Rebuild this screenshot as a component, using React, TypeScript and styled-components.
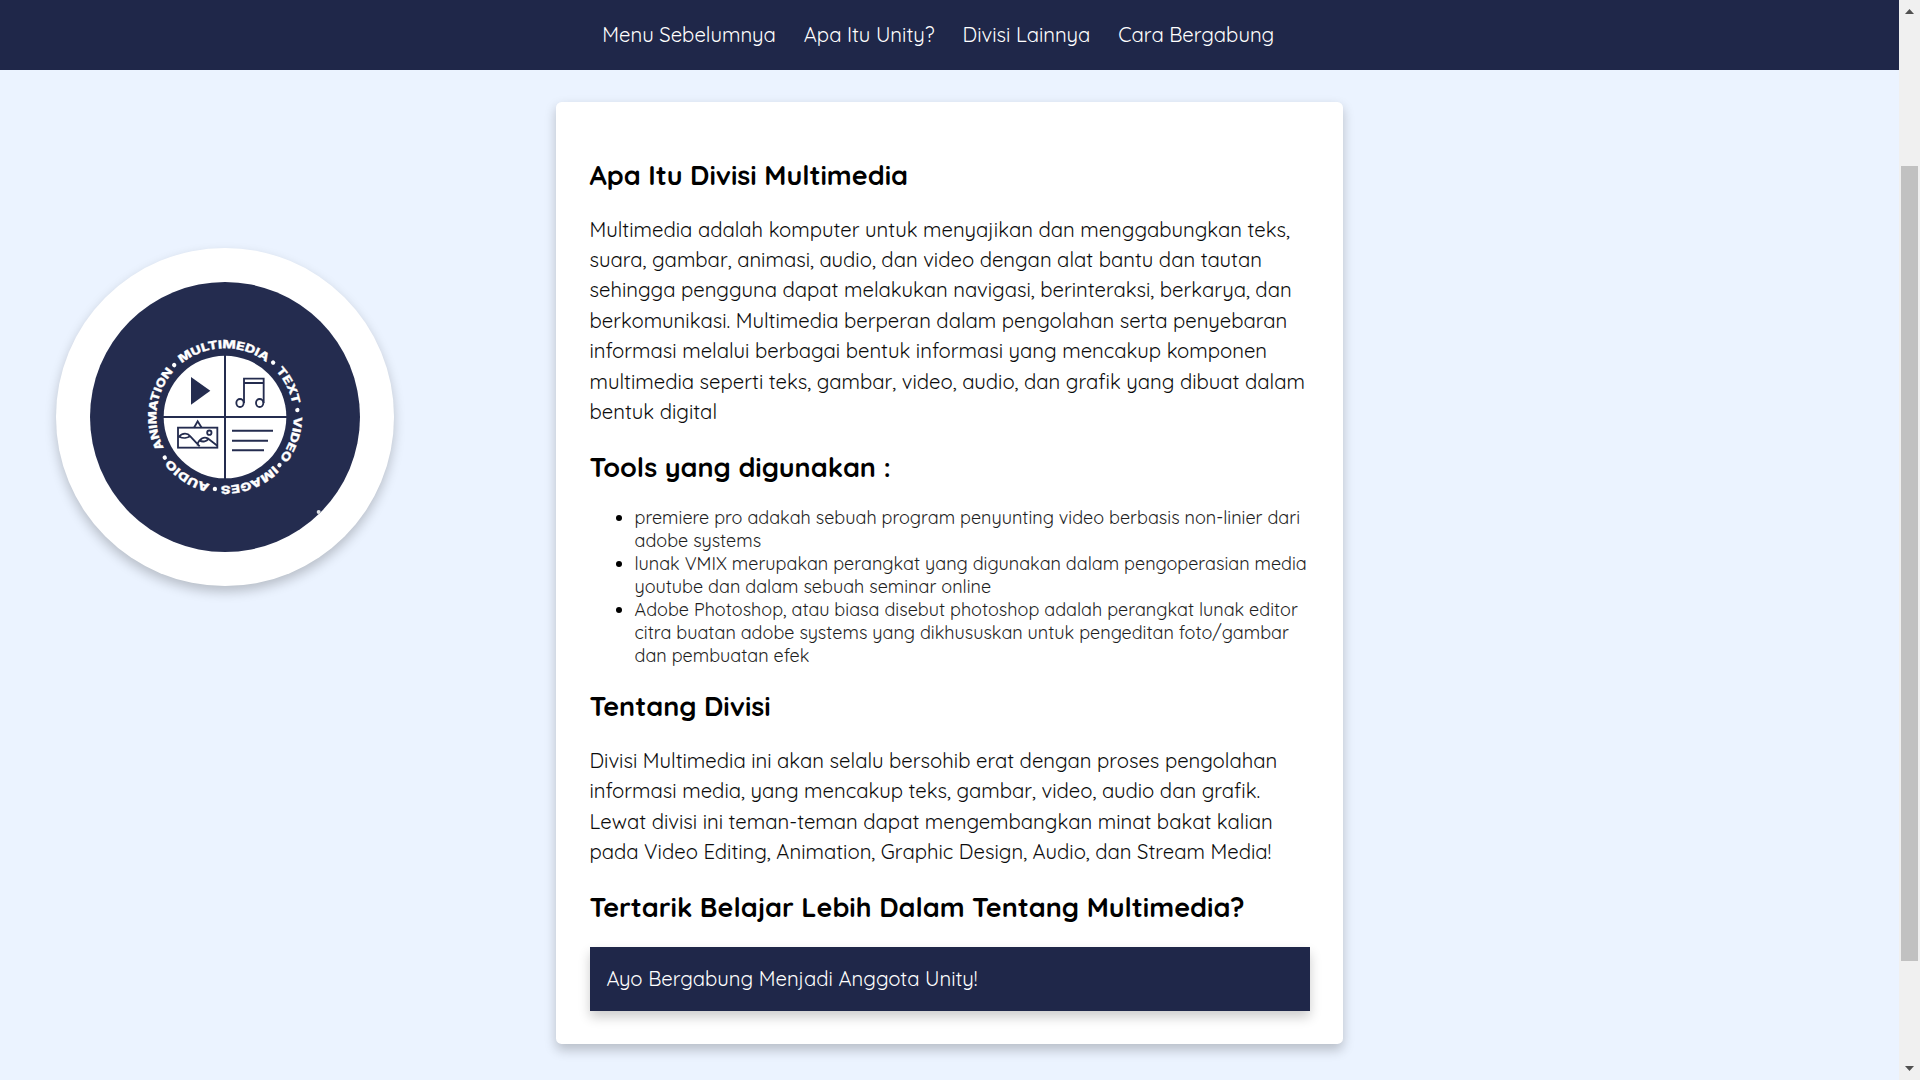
import React from "react";
import styled, { createGlobalStyle } from "styled-components";

const navy = "#1f2749";
const ink = "#242c4f";

const GlobalStyle = createGlobalStyle`
  *, *::before, *::after { box-sizing: border-box; }
  body {
    margin: 0;
    background: #ebf3ff;
    color: #000;
    font-family: Quicksand, Lato, sans-serif;
    font-size: 18px;
    overflow: hidden;
  }
`;

const Screen = styled.div`
  display: flex;
  width: 100%;
  height: 1080px;
  overflow: hidden;
`;

const Page = styled.div`
  flex: 1;
  min-width: 0;
  display: flex;
  flex-direction: column;
`;

const Nav = styled.nav`
  flex: none;
  display: flex;
  justify-content: center;
  align-items: center;
  gap: 28px;
  height: 70px;
  padding: 0 22.4px 0 0;
  background: ${navy};
`;

const NavLink = styled.a`
  color: #fff;
  font-size: 20.25px;
  line-height: 26px;
  white-space: nowrap;
  text-decoration: none;
`;

const Main = styled.main`
  display: grid;
  grid-template-columns: 1fr 787.5px 1fr;
  align-items: start;
  padding-top: 31.75px;
`;

const Aside = styled.aside`
  padding: 146.25px 0 0 56.25px;
`;

const Badge = styled.div`
  width: 337.5px;
  height: 337.5px;
  padding: 33.75px;
  border-radius: 50%;
  background: #fff;
  box-shadow: 0 5.625px 11.25px rgba(0, 0, 0, 0.22);

  svg {
    display: block;
    width: 270px;
    height: 270px;
  }
`;

const Card = styled.article`
  padding: 34.15px 33.75px 33px;
  border-radius: 5.6px;
  background: #fff;
  box-shadow: 0 5.625px 11.25px rgba(0, 0, 0, 0.22);
`;

const Heading = styled.h2`
  margin: 22.4px 0;
  font-size: 27px;
  font-weight: 700;
  line-height: 34px;
`;

const Paragraph = styled.p`
  margin: 22.4px 0;
  color: #0c0c0c;
  font-size: 20.25px;
  line-height: 30.375px;
`;

const ToolList = styled.ul`
  margin: 22.4px 0;
  padding-left: 45px;
  color: #1e1e1e;
  line-height: 23px;

  li::marker { color: #000; }
`;

const JoinLink = styled.a`
  display: block;
  margin-top: 22.9px;
  padding: 16.875px;
  background: ${navy};
  box-shadow: 0 5.625px 11.25px rgba(0, 0, 0, 0.2);
  color: #fff;
  font-size: 20.25px;
  line-height: 30.375px;
  text-decoration: none;
`;

const Scrollbar = styled.div`
  flex: none;
  display: flex;
  flex-direction: column;
  align-items: center;
  width: 21px;
  height: 1080px;
  padding: 9px 2px 9px;
  background: #f0f0f0;
`;

const Arrow = styled.i<{ $down?: boolean }>`
  width: 9px;
  height: 5px;
  background: #505050;
  clip-path: ${(p) => (p.$down ? "polygon(0 0, 100% 0, 50% 100%)" : "polygon(50% 0, 100% 100%, 0 100%)")};
`;

const Thumb = styled.div`
  width: 17px;
  height: 795px;
  margin: 152px 0 105px;
  background: #c1c1c1;
`;

const RingText = styled.text`
  fill: #fff;
  stroke: #fff;
  stroke-width: 0.8px;
  font-family: Inter, sans-serif;
  font-size: 34px;
  font-weight: 800;
`;

const RADIUS = 206;

const ringWords = [
  { text: "MULTIMEDIA", from: -39, to: 37 },
  { text: "TEXT", from: 47.5, to: 79.5 },
  { text: "VIDEO", from: 89.5, to: 127.5 },
  { text: "IMAGES", from: 135, to: 183.5 },
  { text: "AUDIO", from: 192.5, to: 232.5 },
  { text: "ANIMATION", from: 243, to: 311.5 },
];

const ringDots = [41.5, 84.5, 131.5, 188, 236, 315.6];

function MultimediaLogo() {
  return (
    <svg viewBox="-135 -130 810 810" role="img" aria-label="Multimedia">
      <defs>
        <clipPath id="disc">
          <circle cx="270" cy="275" r="405" />
        </clipPath>
        <path id="ring" d={`M270 ${275 - RADIUS} a${RADIUS} ${RADIUS} 0 0 1 0 ${RADIUS * 2}`} />
      </defs>
      <circle cx="270" cy="275" r="405" fill={ink} />
      {ringWords.map((w) => (
        <g key={w.text} transform={`rotate(${w.from} 270 275)`}>
          <RingText>
            <textPath
              href="#ring"
              textLength={((w.to - w.from) * Math.PI * RADIUS) / 180}
              lengthAdjust="spacingAndGlyphs"
            >
              {w.text}
            </textPath>
          </RingText>
        </g>
      ))}
      {ringDots.map((a) => (
        <circle key={a} cx="270" cy="57" r="6.5" fill="#fff" transform={`rotate(${a} 270 275)`} />
      ))}
      <circle cx="270" cy="275" r="184" fill="#fff" />
      <path d="M270 88V462M84 275H456" stroke={ink} strokeWidth="6" />
      <path d="M168 155L226 196L168 238Z" fill={ink} />
      <g fill="none" stroke={ink} strokeWidth="5.5">
        <path d="M327 233V160H386V233M327 173H386" />
        <ellipse cx="315" cy="233" rx="11" ry="12" />
        <ellipse cx="374" cy="233" rx="11" ry="12" />
        <rect x="129" y="307" width="118" height="60" />
        <path d="M177 307L188 288L200 307" />
        <circle cx="223" cy="322" r="6.5" />
        <path d="M130 336C143 321 158 323 166 333L194 363M134 335C144 339 158 338 165 333M186 360C193 340 207 333 218 339L247 361M194 346C204 351 215 348 220 341" />
        <path d="M291 316H414M291 346H399M291 375H387" strokeWidth="6" />
      </g>
      <g clipPath="url(#disc)" fill="#dfe3e6">
        <circle cx="551" cy="560" r="6" />
        <circle cx="560" cy="568" r="5" />
      </g>
    </svg>
  );
}

const links = ["Menu Sebelumnya", "Apa Itu Unity?", "Divisi Lainnya", "Cara Bergabung"];

const tools = [
  "premiere pro adakah sebuah program penyunting video berbasis non-linier dari adobe systems",
  "lunak VMIX merupakan perangkat yang digunakan dalam pengoperasian media youtube dan dalam sebuah seminar online",
  "Adobe Photoshop, atau biasa disebut photoshop adalah perangkat lunak editor citra buatan adobe systems yang dikhususkan untuk pengeditan foto/gambar dan pembuatan efek",
];

export default function App() {
  return (
    <>
      <GlobalStyle />
      <Screen>
        <Page>
          <Nav>
            {links.map((label) => (
              <NavLink key={label}>{label}</NavLink>
            ))}
          </Nav>
          <Main>
            <Aside>
              <Badge>
                <MultimediaLogo />
              </Badge>
            </Aside>
            <Card>
              <Heading>Apa Itu Divisi Multimedia</Heading>
              <Paragraph>
                Multimedia adalah komputer untuk menyajikan dan menggabungkan teks, suara, gambar, animasi, audio, dan
                video dengan alat bantu dan tautan sehingga pengguna dapat melakukan navigasi, berinteraksi, berkarya,
                dan berkomunikasi. Multimedia berperan dalam pengolahan serta penyebaran informasi melalui berbagai
                bentuk informasi yang mencakup komponen multimedia seperti teks, gambar, video, audio, dan grafik yang
                dibuat dalam bentuk digital
              </Paragraph>
              <Heading>Tools yang digunakan :</Heading>
              <ToolList>
                {tools.map((tool) => (
                  <li key={tool}>{tool}</li>
                ))}
              </ToolList>
              <Heading>Tentang Divisi</Heading>
              <Paragraph>
                Divisi Multimedia ini akan selalu bersohib erat dengan proses pengolahan informasi media, yang mencakup
                teks, gambar, video, audio dan grafik. Lewat divisi ini teman-teman dapat mengembangkan minat bakat
                kalian pada Video Editing, Animation, Graphic Design, Audio, dan Stream Media!
              </Paragraph>
              <Heading>Tertarik Belajar Lebih Dalam Tentang Multimedia?</Heading>
              <JoinLink>Ayo Bergabung Menjadi Anggota Unity!</JoinLink>
            </Card>
          </Main>
        </Page>
        <Scrollbar>
          <Arrow />
          <Thumb />
          <Arrow $down />
        </Scrollbar>
      </Screen>
    </>
  );
}
